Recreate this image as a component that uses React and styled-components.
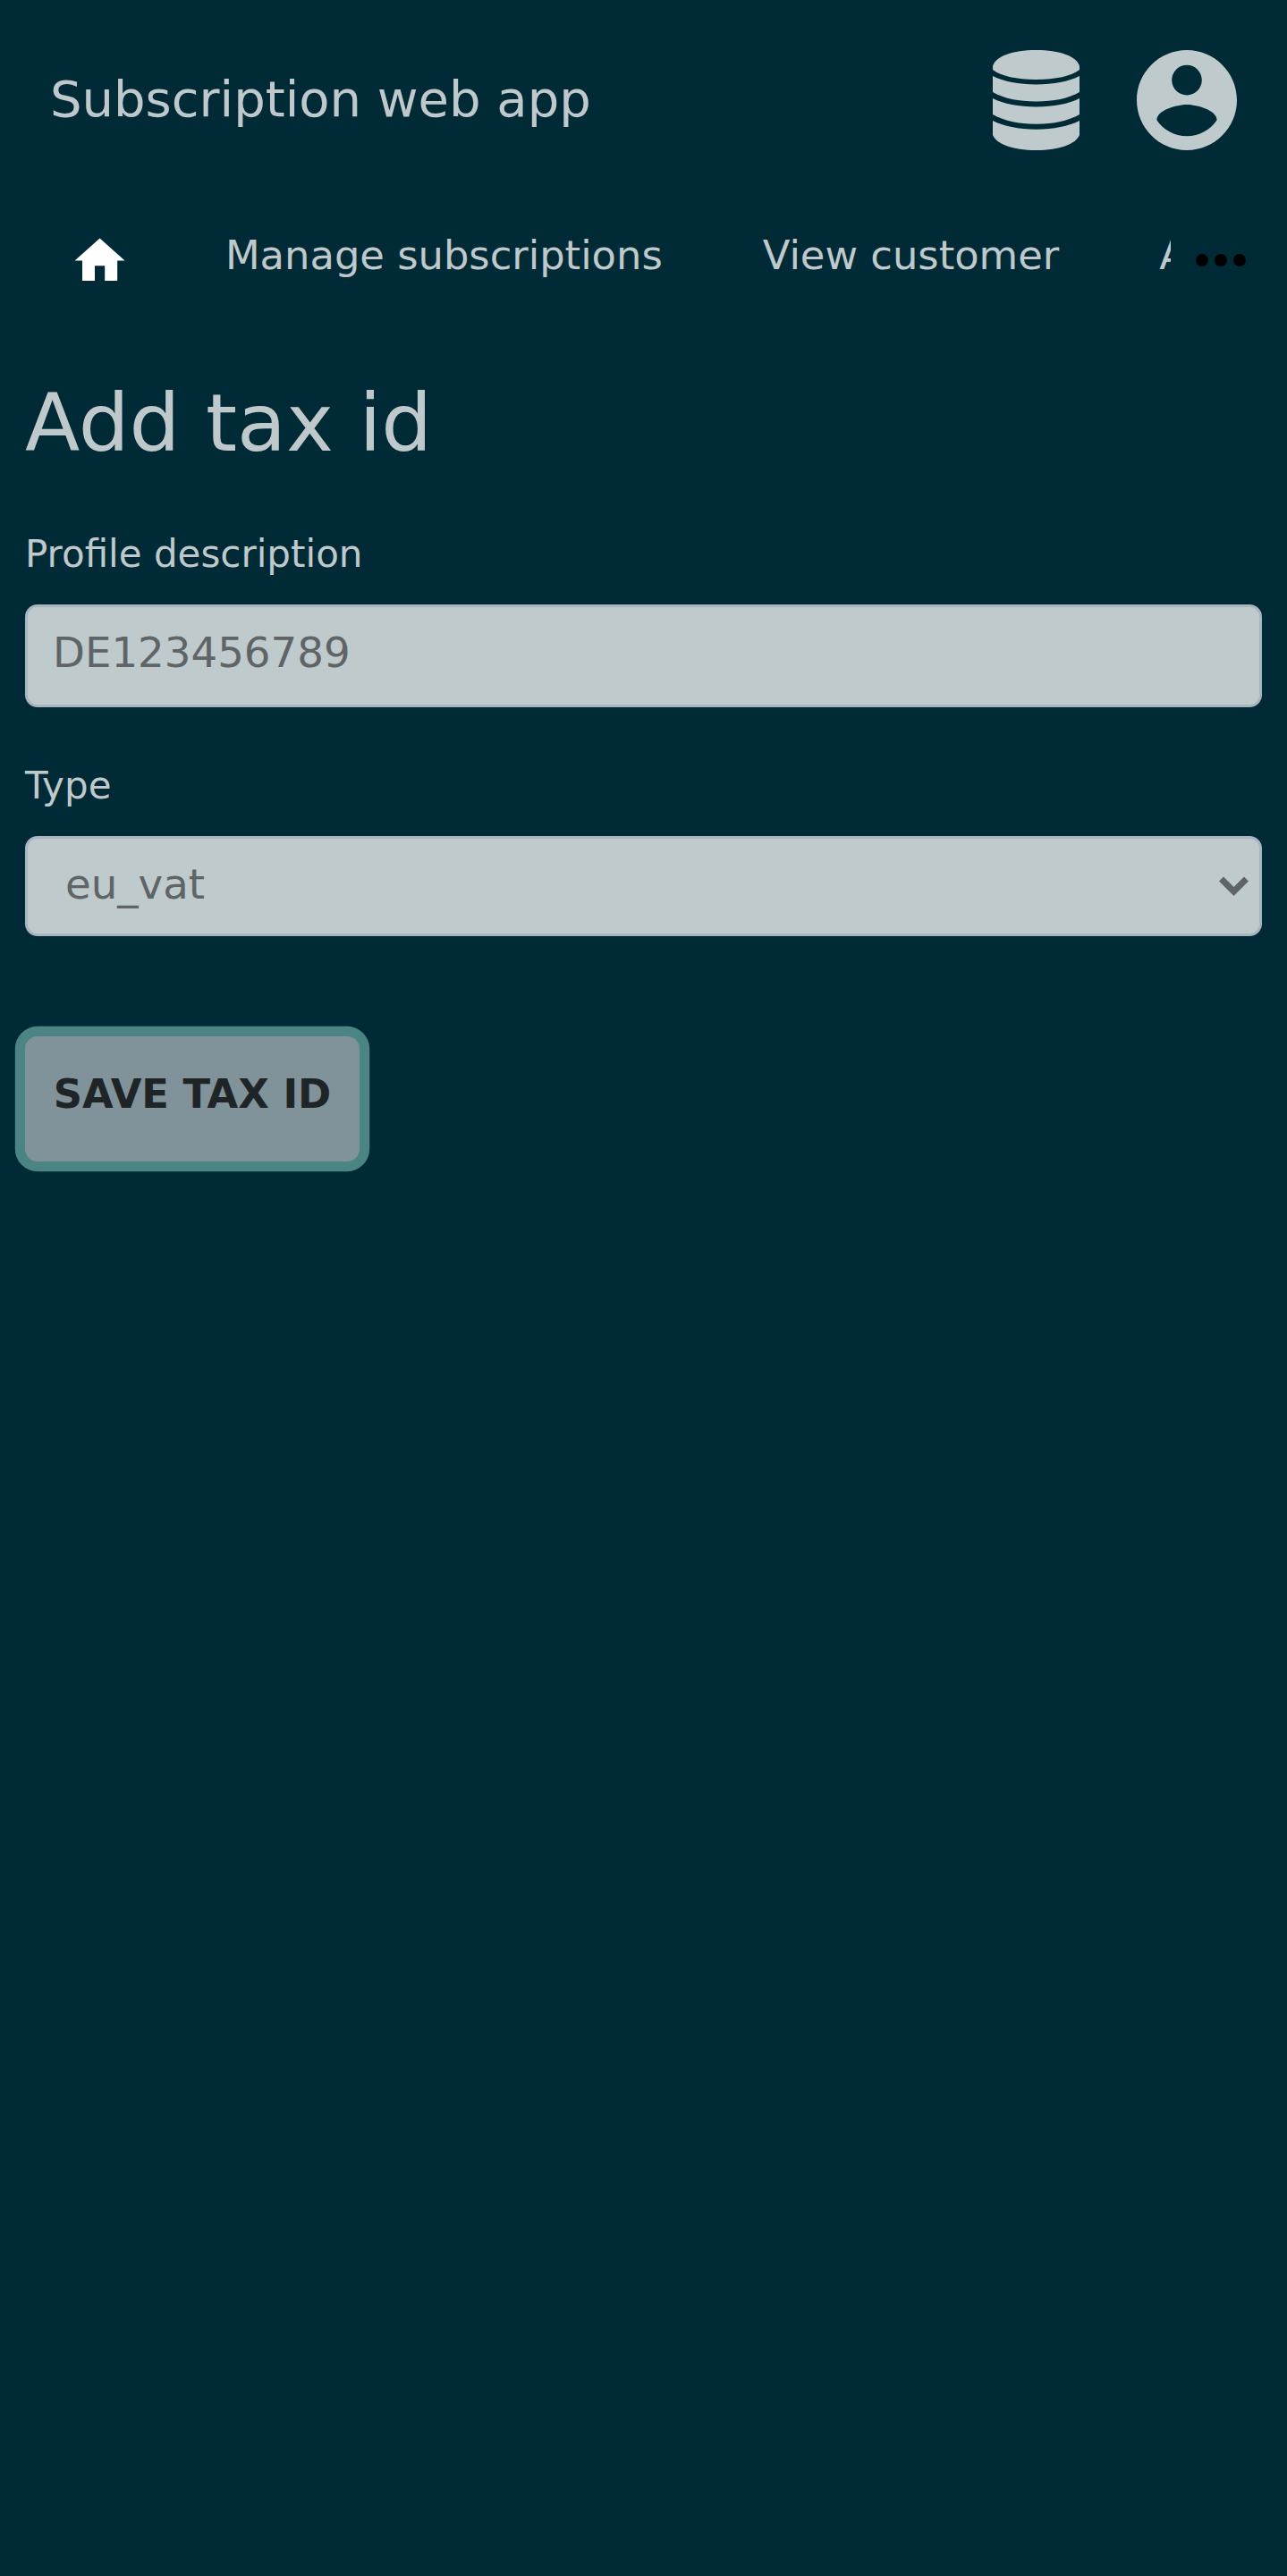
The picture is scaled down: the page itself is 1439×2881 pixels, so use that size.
import React from "react";
import styled, { createGlobalStyle } from "styled-components";

const GlobalStyle = createGlobalStyle`
  *, *::before, *::after { box-sizing: border-box; }
  body {
    margin: 0;
    background: #002b36;
    color: #bfc9cb;
    font-family: "DejaVu Sans", sans-serif;
  }
`;

const Page = styled.div`
  min-height: 2881px;
  overflow: hidden;
`;

const Header = styled.header`
  display: flex;
  align-items: center;
  height: 224px;
  padding: 0 56px;
`;

const AppTitle = styled.div`
  flex: 1;
  padding-bottom: 3px;
  font-size: 56px;
  line-height: 66px;
  white-space: nowrap;
`;

const HeaderIcons = styled.div`
  display: flex;
  align-items: center;
  gap: 64px;
`;

const Icon = styled.svg`
  display: block;
  flex: none;
  width: ${(p) => p.$w}px;
  height: ${(p) => p.$h}px;
  fill: ${(p) => p.$color || "#bfcacc"};
`;

const NavBar = styled.nav`
  display: flex;
  align-items: center;
  height: 133px;
`;

const NavItems = styled.div`
  display: flex;
  width: 1309px;
  height: 133px;
  padding-left: 78.4px;
  overflow: hidden;
`;

const HomeLink = styled.a`
  flex: none;
  padding-top: 34.4px;
  margin-right: 106.4px;
`;

const NavLink = styled.a`
  flex: none;
  margin-right: 112px;
  padding-top: 35px;
  font-size: 44.8px;
  line-height: 53px;
  white-space: nowrap;
`;

const MoreButton = styled.div`
  margin-left: 14px;
`;

const Main = styled.main`
  padding: 0 28px;
`;

const Heading = styled.h1`
  margin: 0;
  padding-top: 63px;
  font-size: 89.6px;
  font-weight: 400;
  line-height: 106px;
`;

const Label = styled.label`
  display: block;
  margin-top: ${(p) => p.$gap}px;
  font-size: 42px;
  line-height: 50px;
`;

const control = `
  display: flex;
  width: 100%;
  margin-top: 31.5px;
  border: 3.5px solid #aab5c2;
  border-radius: 14px;
  background: #bfcacc;
  color: #5f6466;
  font-size: 46.67px;
`;

const TextField = styled.input`
  ${control}
  height: 115px;
  padding: 0 28px 7px;
  font-family: inherit;
  outline: none;
  &::placeholder { color: #5f6466; opacity: 1; }
`;

const SelectField = styled.div`
  ${control}
  align-items: center;
  justify-content: space-between;
  height: 112px;
  padding: 0 12px 0 42px;
`;

const SelectValue = styled.span`
  margin-bottom: 4px;
`;

const SaveButton = styled.button`
  display: block;
  width: 374px;
  height: 140px;
  margin-top: 112px;
  padding: 0 0 11px;
  border: 0;
  border-radius: 14px;
  background: #80939a;
  box-shadow: 0 0 0 11.2px #4a8483;
  color: #1f2426;
  font-family: inherit;
  font-size: 44.8px;
  font-weight: 700;
  white-space: nowrap;
`;

export default function App() {
  return (
    <Page>
      <GlobalStyle />
      <Header>
        <AppTitle>Subscription web app</AppTitle>
        <HeaderIcons>
          <Icon $w={97} $h={112} viewBox="0 0 97 112">
            <path d="M0 18C3 7 22 0 48.5 0S94 7 97 18V22C88 29 70 33 48.5 33S9 29 0 22Z" />
            <path d="M0 29C12 35 29 38.5 48.5 38.5S85 35 97 29V47C85 54 68 57.5 48.5 57.5S12 54 0 47Z" />
            <path d="M0 54C12 60 29 63.5 48.5 63.5S85 60 97 54V72C85 79 68 82.7 48.5 82.7S12 79 0 72Z" />
            <path d="M0 79C12 85 29 88.7 48.5 88.7S85 85 97 79V95C93 105 75 112 48.5 112S4 105 0 95Z" />
          </Icon>
          <Icon $w={112} $h={112} viewBox="2 2 20 20">
            <path d="M12 2C6.48 2 2 6.48 2 12s4.48 10 10 10 10-4.48 10-10S17.52 2 12 2zm0 3c1.66 0 3 1.34 3 3s-1.34 3-3 3-3-1.34-3-3 1.34-3 3-3zm0 14.2c-2.5 0-4.71-1.28-6-3.22.03-1.99 4-3.08 6-3.08 1.99 0 5.97 1.09 6 3.08-1.29 1.94-3.5 3.22-6 3.22z" />
          </Icon>
        </HeaderIcons>
      </Header>
      <NavBar>
        <NavItems>
          <HomeLink>
            <Icon $w={67.2} $h={67.2} $color="#fff" viewBox="0 0 24 24">
              <path d="M10 20v-6h4v6h5v-8h3L12 3 2 12h3v8z" />
            </Icon>
          </HomeLink>
          <NavLink>Manage subscriptions</NavLink>
          <NavLink>View customer</NavLink>
          <NavLink>A</NavLink>
        </NavItems>
        <MoreButton>
          <Icon $w={84} $h={84} $color="#000" viewBox="0 0 24 24">
            <circle cx="6" cy="12" r="2" />
            <circle cx="12" cy="12" r="2" />
            <circle cx="18" cy="12" r="2" />
          </Icon>
        </MoreButton>
      </NavBar>
      <Main>
        <Heading>Add tax id</Heading>
        <Label $gap={68.5}>Profile description</Label>
        <TextField placeholder="DE123456789" />
        <Label $gap={62.5}>Type</Label>
        <SelectField>
          <SelectValue>eu_vat</SelectValue>
          <Icon $w={33} $h={22} $color="#5f6466" viewBox="0 0 33 22">
            <path d="M5 0.5L16.5 12L28 0.5L33 5.5L16.5 22L0 5.5Z" />
          </Icon>
        </SelectField>
        <SaveButton>SAVE TAX ID</SaveButton>
      </Main>
    </Page>
  );
}
